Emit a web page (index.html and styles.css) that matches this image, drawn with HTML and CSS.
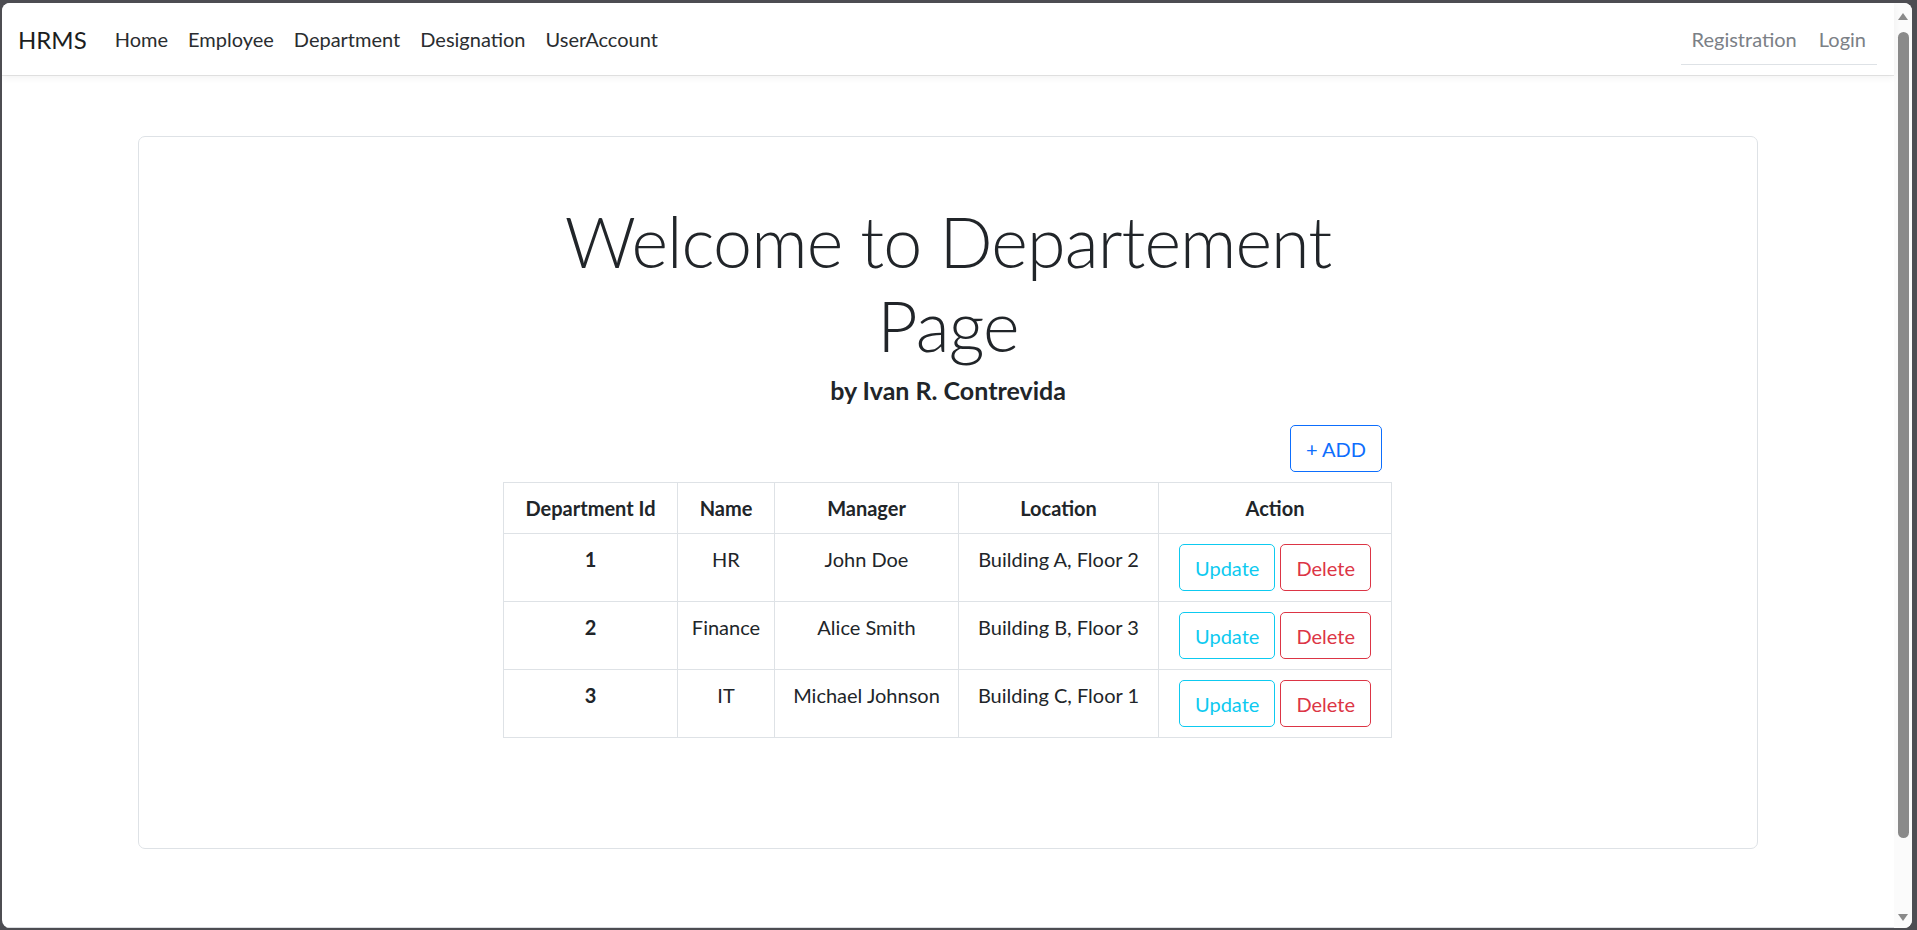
FILE: index.html
```html
<!DOCTYPE html>
<html lang="en">
<head>
<meta charset="utf-8">
<title>HRMS - Department</title>
<link rel="stylesheet" href="styles.css">
</head>
<body>
<div class="window">
  <div class="page">
    <nav class="navbar">
      <a class="brand" href="#">HRMS</a>
      <ul class="nav nav-left">
        <li><a class="nav-link" href="#">Home</a></li>
        <li><a class="nav-link" href="#">Employee</a></li>
        <li><a class="nav-link" href="#">Department</a></li>
        <li><a class="nav-link" href="#">Designation</a></li>
        <li><a class="nav-link" href="#">UserAccount</a></li>
      </ul>
      <ul class="nav nav-right">
        <li><a class="nav-link muted" href="#">Registration</a></li>
        <li><a class="nav-link muted" href="#">Login</a></li>
      </ul>
    </nav>
    <main class="container">
      <div class="card">
        <div class="hero">
          <h1 class="title">Welcome to Departement Page</h1>
          <h5 class="subtitle">by Ivan R. Contrevida</h5>
        </div>
        <div class="table-wrap">
          <div class="toolbar">
            <button class="btn btn-primary">+ ADD</button>
          </div>
          <table class="dept-table">
            <colgroup>
              <col class="c-id"><col class="c-name"><col class="c-mgr"><col class="c-loc"><col class="c-act">
            </colgroup>
            <thead>
              <tr><th>Department Id</th><th>Name</th><th>Manager</th><th>Location</th><th>Action</th></tr>
            </thead>
            <tbody>
              <tr>
                <th>1</th><td>HR</td><td>John Doe</td><td>Building A, Floor 2</td>
                <td class="actions"><button class="btn btn-info">Update</button> <button class="btn btn-danger">Delete</button></td>
              </tr>
              <tr>
                <th>2</th><td>Finance</td><td>Alice Smith</td><td>Building B, Floor 3</td>
                <td class="actions"><button class="btn btn-info">Update</button> <button class="btn btn-danger">Delete</button></td>
              </tr>
              <tr>
                <th>3</th><td>IT</td><td>Michael Johnson</td><td>Building C, Floor 1</td>
                <td class="actions"><button class="btn btn-info">Update</button> <button class="btn btn-danger">Delete</button></td>
              </tr>
            </tbody>
          </table>
        </div>
      </div>
    </main>
  </div>
  <div class="scrollbar">
    <div class="arrow arrow-up"></div>
    <div class="thumb"></div>
    <div class="spacer"></div>
    <div class="arrow arrow-down"></div>
  </div>
</div>
</body>
</html>
```
FILE: styles.css
```css
* { box-sizing: border-box; }

html, body {
  margin: 0;
  height: 930px;
  overflow: hidden;
}

body {
  background: #4d4d52;
  padding: 3px 5px 2px 2px;
  font-family: Lato, "Liberation Sans", sans-serif;
  color: #212529;
  font-size: 20px;
  line-height: 30px;
}

.window {
  display: flex;
  height: 925px;
  background: #fff;
  border-radius: 8px;
  overflow: hidden;
}

.page {
  flex: 1;
  display: flex;
  flex-direction: column;
  border-bottom: 1px solid #dadce0;
}

/* Navbar */
.navbar {
  height: 72px;
  flex: none;
  display: flex;
  align-items: center;
  padding: 0 17px 0 15px;
  background: #fff;
  box-shadow: 0 1px 0 rgba(0,0,0,0.09), 0 3px 7px rgba(0,0,0,0.05);
  position: relative;
  z-index: 1;
}

.brand {
  font-size: 24px;
  line-height: 37px;
  color: #1b1e21;
  text-decoration: none;
  margin-right: 18px;
  padding-left: 1px;
}

.nav {
  list-style: none;
  margin: 0;
  padding: 0;
  display: flex;
}

.nav-link {
  display: block;
  padding: 10px 10px;
  color: #2a2d30;
  text-decoration: none;
}

.nav-link.muted { color: #7b8086; }

.nav-right {
  margin-left: auto;
  border-bottom: 1px solid #dee2e6;
}

.nav-right .nav-link { padding: 10px 11px; }

/* Content */
.container {
  width: 1620px;
  margin: 0 auto;
  padding-top: 61px;
}

.card {
  border: 1px solid #dee2e6;
  border-radius: 7px;
  padding: 62px 20px 110px;
}

.hero {
  text-align: center;
}

.title {
  max-width: 820px;
  margin: 0 auto;
  font-size: 70px;
  line-height: 84px;
  font-weight: 300;
  letter-spacing: -0.9px;
}

.subtitle {
  margin: 8px 0 0;
  font-size: 25px;
  line-height: 30px;
  font-weight: 700;
}

.table-wrap {
  width: 888px;
  margin: 20px auto 0;
  position: relative;
  left: -1px;
}

.toolbar {
  display: flex;
  justify-content: flex-end;
  padding-right: 9px;
  margin-bottom: 10px;
}

/* Buttons */
.btn {
  font-family: inherit;
  font-size: 20px;
  line-height: 30px;
  padding: 7.5px 15px;
  background: #fff;
  border: 1px solid;
  border-radius: 5px;
  cursor: pointer;
}

.btn-primary { color: #0d6efd; border-color: #0d6efd; }
.btn-info { color: #0dcaf0; border-color: #0dcaf0; }
.btn-danger { color: #dc3545; border-color: #dc3545; }

/* Table */
.dept-table {
  width: 888px;
  table-layout: fixed;
  border-collapse: collapse;
  text-align: center;
}

.c-id { width: 174px; }
.c-name { width: 97px; }
.c-mgr { width: 184px; }
.c-loc { width: 200px; }
.c-act { width: 233px; }

.dept-table th,
.dept-table td {
  border: 1px solid #dee2e6;
  padding: 10px 10px;
  vertical-align: top;
  white-space: nowrap;
}

.dept-table th { font-weight: 700; }

.dept-table td.actions { padding: 10px 0; }

/* Fake scrollbar */
.scrollbar {
  width: 18px;
  flex: none;
  background: #fbfbfb;
  display: flex;
  flex-direction: column;
  align-items: center;
  padding: 10px 0 7px;
}

.arrow {
  width: 0;
  height: 0;
  border-left: 5.5px solid transparent;
  border-right: 5.5px solid transparent;
}

.arrow-up { border-bottom: 7px solid #8a8a8a; }
.arrow-down { border-top: 7px solid #8a8a8a; }

.thumb {
  margin-top: 12px;
  width: 11px;
  height: 806px;
  border-radius: 6px;
  background: #8a8a8a;
}

.spacer { flex: 1; }
```
